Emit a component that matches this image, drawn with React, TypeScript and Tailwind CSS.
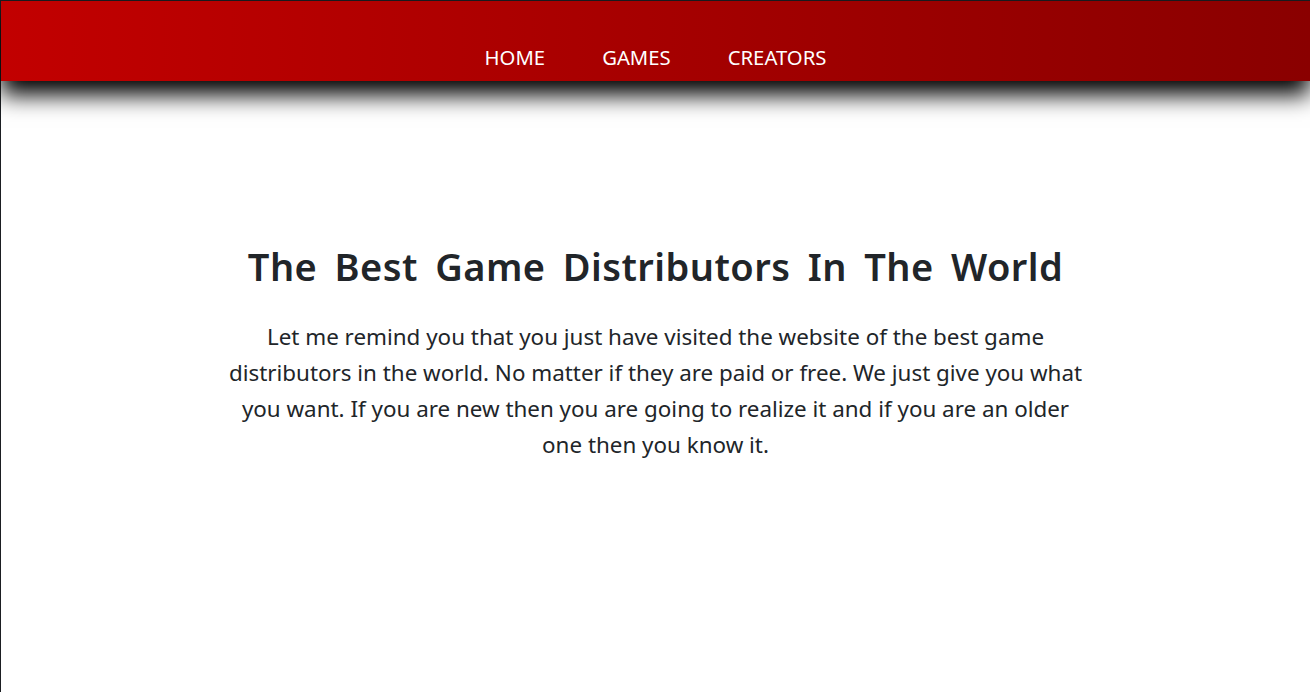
export default function App() {
  const links = ["HOME", "GAMES", "CREATORS"];

  return (
    <div className="min-h-[692px] bg-white border-l border-t border-[#1b1e22] font-['Noto_Sans',_'Open_Sans',_sans-serif] text-[#212529]">
      <header className="h-[80px] bg-gradient-to-r from-[#c20000] to-[#8a0000] shadow-[0_14px_22px_rgba(0,0,0,1)] flex justify-center items-start pt-[44px]">
        <nav className="flex gap-[57px]">
          {links.map((link) => (
            <a key={link} href="#" className="text-white text-[20.3px] leading-[24px]">
              {link}
            </a>
          ))}
        </nav>
      </header>

      <main className="flex flex-col items-center pt-[161px]">
        <h1 className="text-[38px] leading-[48px] font-semibold tracking-[0.45px] [word-spacing:7px]">
          The Best Game Distributors In The World
        </h1>
        <p className="mt-[29px] w-[870px] text-center text-[22.4px] leading-[36px]">
          Let me remind you that you just have visited the website of the best game distributors in the world. No matter if they are paid or free. We just give you what you want. If you are new then you are going to realize it and if you are an older one then you know it.
        </p>
      </main>
    </div>
  );
}
